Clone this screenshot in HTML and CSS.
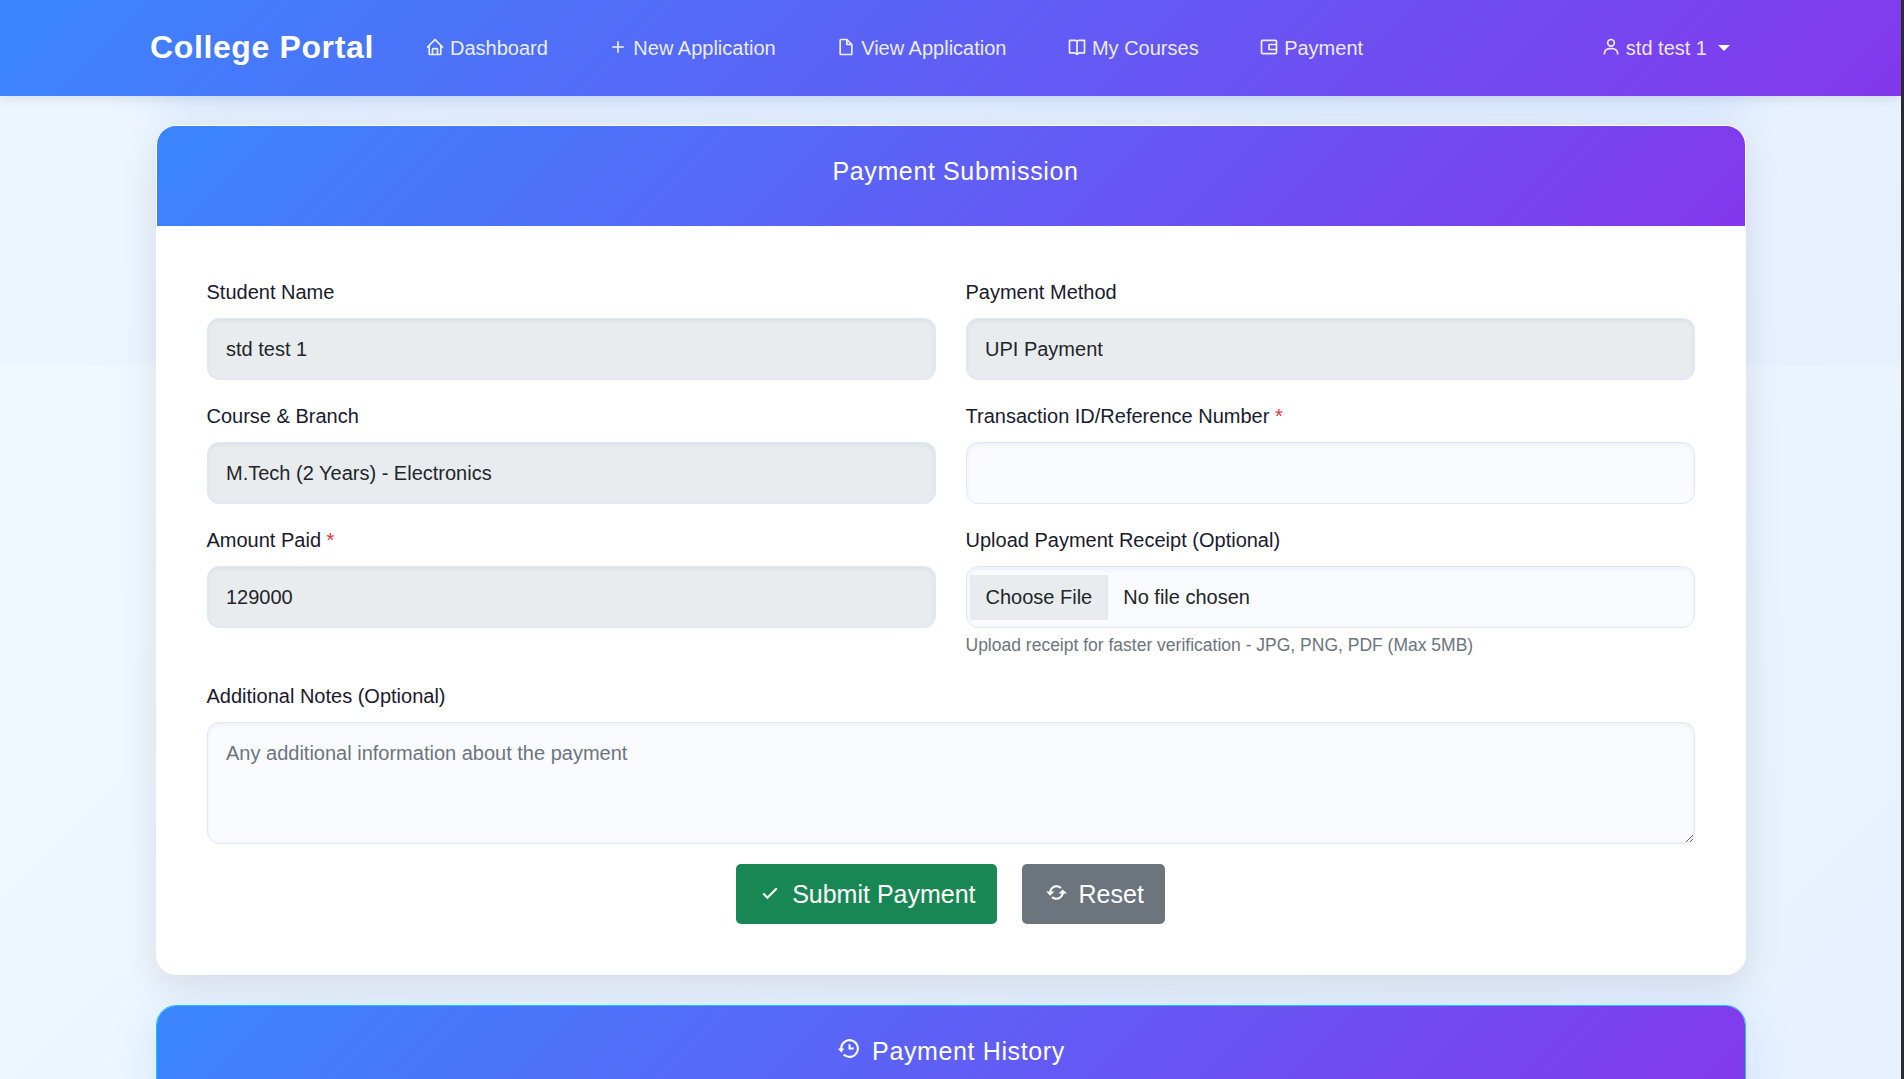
FILE: index.html
```html
<!DOCTYPE html>
<html lang="en">
<head>
<meta charset="utf-8">
<title>College Portal</title>
<link rel="stylesheet" href="styles.css">
</head>
<body>
<div class="page">
  <nav class="navbar">
    <a class="brand">College Portal</a>
    <ul class="nav-links">
      <li><svg class="icon" viewBox="0 0 24 24"><path d="M3 13h1v7c0 1.103.897 2 2 2h12c1.103 0 2-.897 2-2v-7h1a1 1 0 0 0 .707-1.707l-9-9a.999.999 0 0 0-1.414 0l-9 9A1 1 0 0 0 3 13zm7 7v-5h4v5h-4zm2-15.586 6 6V15l.001 5H16v-5c0-1.103-.897-2-2-2h-4c-1.103 0-2 .897-2 2v5H6v-9.586l6-6z"/></svg><span>Dashboard</span></li>
      <li><svg class="icon" viewBox="0 0 24 24"><path d="M19 11h-6V5h-2v6H5v2h6v6h2v-6h6z"/></svg><span>New Application</span></li>
      <li><svg class="icon" viewBox="0 0 24 24"><path d="M19.903 8.586a.997.997 0 0 0-.196-.293l-6-6a.997.997 0 0 0-.293-.196c-.03-.014-.062-.022-.094-.033a.991.991 0 0 0-.259-.051C13.04 2.011 13.021 2 13 2H6c-1.103 0-2 .897-2 2v16c0 1.103.897 2 2 2h12c1.103 0 2-.897 2-2V9c0-.021-.011-.04-.013-.062a.952.952 0 0 0-.051-.259c-.01-.032-.019-.063-.033-.093zM16.586 8H14V5.414L16.586 8zM6 20V4h6v5a1 1 0 0 0 1 1h5l.002 10H6z"/></svg><span>View Application</span></li>
      <li><svg class="icon" viewBox="0 0 24 24"><path d="M21 3h-7a2.98 2.98 0 0 0-2 .78A2.98 2.98 0 0 0 10 3H3a1 1 0 0 0-1 1v15a1 1 0 0 0 1 1h5.758c.526 0 1.042.214 1.414.586l1.121 1.121c.009.009.021.012.03.021.086.08.182.15.294.196h.002a.996.996 0 0 0 .762 0h.002c.112-.046.208-.117.294-.196.009-.009.021-.012.03-.021l1.121-1.121A2.015 2.015 0 0 1 15.242 20H21a1 1 0 0 0 1-1V4a1 1 0 0 0-1-1zM8.758 18H4V5h6c.552 0 1 .449 1 1v12.689A4.032 4.032 0 0 0 8.758 18zM20 18h-4.758c-.799 0-1.584.246-2.242.689V6c0-.551.448-1 1-1h6v13z"/></svg><span>My Courses</span></li>
      <li><svg class="icon outline" viewBox="0 0 24 24"><rect x="3" y="4" width="18" height="16" rx="1.5"/><path d="M21 9h-8.500a.5.5 0 0 0-.5.5v5a.5.5 0 0 0 .5.5H21"/></svg><span>Payment</span></li>
    </ul>
    <div class="user"><svg class="icon" viewBox="0 0 24 24"><path d="M12 2a5 5 0 1 0 5 5 5 5 0 0 0-5-5zm0 8a3 3 0 1 1 3-3 3 3 0 0 1-3 3zm9 11v-1a7 7 0 0 0-7-7h-4a7 7 0 0 0-7 7v1h2v-1a5 5 0 0 1 5-5h4a5 5 0 0 1 5 5v1z"/></svg><span>std test 1</span><i class="caret"></i></div>
  </nav>
  <main class="content">
    <section class="card card-scrolled"></section>
    <section class="card payment-card">
      <header class="card-header title-offset"><h5>Payment Submission</h5></header>
      <form class="form">
        <div class="grid">
          <div class="field"><label>Student Name</label><input class="control" type="text" value="std test 1" readonly></div>
          <div class="field"><label>Payment Method</label><input class="control" type="text" value="UPI Payment" readonly></div>
          <div class="field"><label>Course &amp; Branch</label><input class="control" type="text" value="M.Tech (2 Years) - Electronics" readonly></div>
          <div class="field"><label>Transaction ID/Reference Number <span class="required">*</span></label><input class="control" type="text"></div>
          <div class="field"><label>Amount Paid <span class="required">*</span></label><input class="control" type="text" value="129000" readonly></div>
          <div class="field"><label>Upload Payment Receipt (Optional)</label><div class="control file"><span class="file-button">Choose File</span><span>No file chosen</span></div><small>Upload receipt for faster verification - JPG, PNG, PDF (Max 5MB)</small></div>
          <div class="field wide"><label>Additional Notes (Optional)</label><textarea class="control" placeholder="Any additional information about the payment"></textarea></div>
        </div>
        <div class="actions">
          <button type="button" class="btn submit"><svg class="icon" viewBox="0 0 24 24"><path d="m10 15.586-3.293-3.293-1.414 1.414L10 18.414l9.707-9.707-1.414-1.414z"/></svg>Submit Payment</button>
          <button type="button" class="btn reset"><svg class="icon" viewBox="0 0 24 24"><path d="M10 11H7.101l.001-.009a4.956 4.956 0 0 1 .752-1.787 5.054 5.054 0 0 1 2.2-1.811c.302-.128.617-.226.938-.291a5.078 5.078 0 0 1 2.018 0 4.978 4.978 0 0 1 2.525 1.361l1.416-1.412a7.036 7.036 0 0 0-2.224-1.501 6.921 6.921 0 0 0-1.315-.408 7.079 7.079 0 0 0-2.819 0 6.94 6.94 0 0 0-1.316.409 7.04 7.04 0 0 0-3.08 2.534 6.978 6.978 0 0 0-1.054 2.505c-.028.135-.043.273-.063.41H2l4 4 4-4zm4 2h2.899l-.001.008a4.976 4.976 0 0 1-2.103 3.138 4.943 4.943 0 0 1-1.787.752 5.073 5.073 0 0 1-2.017 0 4.956 4.956 0 0 1-1.787-.752 5.072 5.072 0 0 1-.74-.61L7.05 16.95a7.032 7.032 0 0 0 2.225 1.5c.424.18.867.317 1.315.408a7.07 7.07 0 0 0 2.818 0 7.031 7.031 0 0 0 4.395-2.945 6.974 6.974 0 0 0 1.053-2.503c.027-.135.043-.273.063-.41H22l-4-4-4 4z"/></svg>Reset</button>
        </div>
      </form>
    </section>
    <section class="card history-card">
      <header class="card-header"><svg class="icon" viewBox="0 0 24 24"><path d="M12 8v5h5v-2h-3V8z"/><path d="M21.292 8.497a8.957 8.957 0 0 0-1.928-2.862 9.004 9.004 0 0 0-4.55-2.452 9.09 9.09 0 0 0-3.626 0 8.965 8.965 0 0 0-4.552 2.453 9.048 9.048 0 0 0-1.928 2.86A8.963 8.963 0 0 0 4 12l.001.025H2L5 16l3-3.975H6.001L6 12a6.957 6.957 0 0 1 1.195-3.913 7.066 7.066 0 0 1 1.891-1.892 7.034 7.034 0 0 1 2.503-1.054 7.003 7.003 0 0 1 8.269 5.445 7.117 7.117 0 0 1 0 2.824 6.936 6.936 0 0 1-1.054 2.503c-.25.371-.537.72-.854 1.036a7.058 7.058 0 0 1-2.225 1.501 6.98 6.98 0 0 1-1.313.408 7.117 7.117 0 0 1-2.823 0 6.957 6.957 0 0 1-2.501-1.053 7.066 7.066 0 0 1-1.037-.855l-1.414 1.414A8.985 8.985 0 0 0 13 21a9.05 9.05 0 0 0 3.503-.707 9.009 9.009 0 0 0 3.959-3.26A8.968 8.968 0 0 0 22 12a8.928 8.928 0 0 0-.708-3.503z"/></svg><h5>Payment History</h5></header>
    </section>
  </main>
</div>
</body>
</html>
```
FILE: styles.css
```css
:root {
  --primary: linear-gradient(135deg, #3a86ff, #8338ec);
}

* { box-sizing: border-box; }

body {
  margin: 0;
  height: 1079px;
  overflow: hidden;
  background: #292b2c;
  font: 20px/30px "Liberation Sans", Arial, sans-serif;
  color: #212529;
}

.page {
  width: calc(100% - 3px);
  height: 1079px;
  overflow: hidden;
  background: linear-gradient(135deg, #f0f8ff, #e6f0ff) 0 365px / 100% 1079px;
}

.icon { flex: none; fill: currentColor; }

.icon.outline {
  fill: none;
  stroke: currentColor;
  stroke-width: 2;
}

.navbar {
  position: relative;
  z-index: 1;
  display: flex;
  align-items: center;
  height: 96px;
  padding: 0 171px 0 150px;
  background: var(--primary);
  box-shadow: 0 2px 12px rgba(0, 0, 0, .1);
  color: rgba(255, 255, 255, .9);
}

.brand {
  width: 275px;
  padding-bottom: 2px;
  color: #fff;
  font-size: 32px;
  font-weight: 700;
  letter-spacing: .625px;
}

.nav-links {
  display: flex;
  gap: 60.5px;
  margin: 0;
  padding: 0;
  list-style: none;
}

.nav-links li,
.user {
  display: flex;
  align-items: center;
  gap: 5px;
}

.navbar .icon {
  width: 20px;
  height: 20px;
  margin-bottom: 3px;
}

.user { margin-left: auto; }

.caret {
  margin-left: 6px;
  border: 6px solid transparent;
  border-top-color: #fff;
  border-bottom: 0;
}

.content {
  display: flex;
  flex-direction: column;
  gap: 30px;
  width: 1590px;
  margin: -81px auto 0;
}

.card {
  flex: none;
  border: 1px solid #fff;
  border-radius: 20px;
  overflow: hidden;
  background: #fff;
  box-shadow: 0 12px 50px rgba(58, 134, 255, .15);
}

.card-scrolled { height: 80px; }

.payment-card {
  height: 850px;
  box-shadow: 0 12px 38px rgba(0, 0, 0, .1);
}

.history-card {
  height: 300px;
  border-color: #0dcaf0;
}

.card-header {
  display: flex;
  justify-content: center;
  height: 100px;
  padding-top: 30px;
  gap: 11px;
  background: var(--primary);
  color: #fff;
}

.title-offset { padding-left: 10px; }

.card-header .icon {
  width: 25px;
  height: 25px;
}

h5 {
  margin: 0;
  font-size: 25px;
  font-weight: 400;
  line-height: 30px;
  letter-spacing: .625px;
}

.form { padding: 51px 50px 50px; }

.grid {
  display: grid;
  grid-template-columns: 1fr 1fr;
  gap: 21px 30px;
}

.field {
  display: flex;
  flex-direction: column;
}

.wide { grid-column: 1 / -1; }

label {
  margin-bottom: 11px;
  color: #1a1a2e;
}

.required { color: #dc3545; }

.control {
  width: 100%;
  height: 62px;
  padding: 0 18.500px;
  border: 1px solid #dde7ff;
  border-radius: 12px;
  outline: 0;
  background: #fafbff;
  box-shadow: inset 0 2px 5px rgba(0, 0, 0, .05);
  color: #212529;
  font: inherit;
}

.control:read-only:not(div) { background: #e9ecef; }

.file {
  display: flex;
  align-items: center;
  gap: 15px;
  padding: 0 3px;
}

.file-button {
  height: 45px;
  padding: 0 15px 0 16px;
  border-right: 1px solid #dde7ff;
  background: #e9ecef;
  line-height: 45px;
}

small {
  margin: 3px 0 1px;
  color: #6c757d;
  font-size: 17.5px;
  line-height: 28px;
}

textarea.control {
  display: block;
  height: 122px;
  padding: 15px 18.500px;
  resize: vertical;
}

textarea::placeholder { color: #6c757d; }

.actions {
  display: flex;
  justify-content: center;
  gap: 25px;
  margin-top: 20px;
}

.btn {
  display: flex;
  align-items: center;
  gap: 10px;
  height: 60px;
  padding: 0 21.5px;
  border: 0;
  border-radius: 5px;
  color: #fff;
  font: 25px "Liberation Sans", Arial, sans-serif;
}

.btn .icon {
  width: 25px;
  height: 25px;
  margin-bottom: 3px;
}

.submit { background: #198754; }
.reset { background: #6c757d; }
```
